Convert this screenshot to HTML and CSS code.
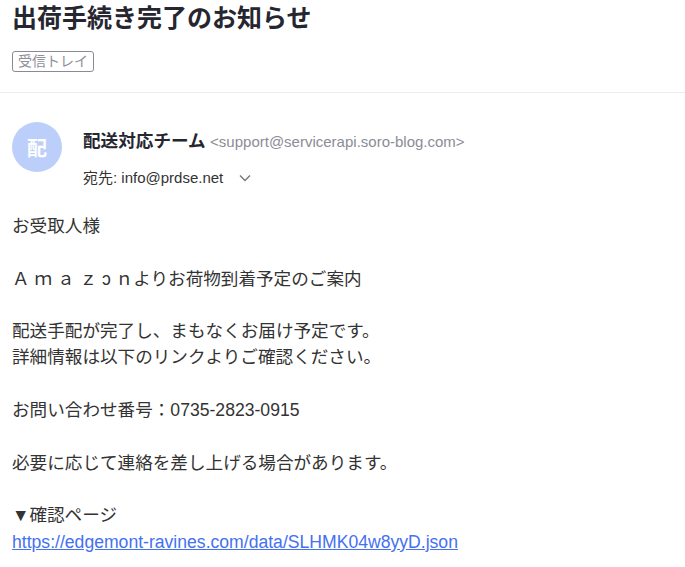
FILE: index.html
```html
<!DOCTYPE html>
<html lang="ja">
<head>
  <meta charset="UTF-8" />
  <title>出荷手続き完了のお知らせ</title>
  <meta name="viewport" content="width=device-width, initial-scale=1.0" />
  <link rel="stylesheet" href="styles.css">
</head>
<body>
  <div class="mail">
    <div class="mail-head">
      <h1 class="subject">出荷手続き完了のお知らせ</h1>
      <span class="label">受信トレイ</span>
    </div>

    <div class="sender">
      <div class="avatar">配</div>
      <div class="sender-info">
        <div class="from">
          <span class="from-name">配送対応チーム</span>
          <span class="from-addr">&lt;support@servicerapi.soro-blog.com&gt;</span>
        </div>
        <div class="to">
          <span>宛先: info@prdse.net</span>
          <svg class="chevron" width="14" height="14" viewBox="0 0 14 14">
            <path d="M2 4.5 L7 9.5 L12 4.5" fill="none" stroke="#777" stroke-width="1.4" />
          </svg>
        </div>
      </div>
    </div>

    <div class="mail-body">
      <p>お受取人様</p>
      <p>Ａ ｍ ａ ｚ ɔ ｎよりお荷物到着予定のご案内</p>
      <p>配送手配が完了し、まもなくお届け予定です。<br>詳細情報は以下のリンクよりご確認ください。</p>
      <p>お問い合わせ番号：0735-2823-0915</p>
      <p>必要に応じて連絡を差し上げる場合があります。</p>
      <p>▼確認ページ<br><a href="#">https://edgemont-ravines.com/data/SLHMK04w8yyD.json</a></p>
    </div>
  </div>
</body>
</html>
```

FILE: styles.css
```css
* {
  box-sizing: border-box;
}

html, body {
  margin: 0;
  padding: 0;
  background: #fff;
  font-family: 'Liberation Sans', 'Noto Sans CJK JP', sans-serif;
  color: #333;
}

.mail-head {
  padding: 0 12px 20px;
  border-bottom: 1px solid #ededf3;
}

.subject {
  margin: 0;
  font-size: 25px;
  line-height: 36px;
  font-weight: 700;
  color: #262630;
}

.label {
  display: inline-block;
  margin-top: 15px;
  padding: 0 5px;
  font-size: 14px;
  line-height: 19px;
  color: #8f8f99;
  border: 1px solid #8a8a94;
  border-radius: 3px;
}

.sender {
  display: flex;
  gap: 21px;
  padding: 29px 12px 0;
}

.avatar {
  width: 50px;
  height: 50px;
  border-radius: 50%;
  background: #bccffb;
  color: #fff;
  font-size: 20px;
  font-weight: 700;
  display: flex;
  justify-content: center;
  align-items: center;
  flex-shrink: 0;
}

.sender-info {
  display: flex;
  flex-direction: column;
  gap: 12px;
  padding-top: 6px;
}

.from {
  line-height: 26px;
}

.from-name {
  font-size: 17.6px;
  font-weight: 700;
  color: #262630;
}

.from-addr {
  font-size: 15px;
  color: #8c8c96;
}

.to {
  display: flex;
  align-items: center;
  gap: 15px;
  font-size: 15px;
  line-height: 22px;
  color: #333;
}

.mail-body {
  padding: 24px 12px 0;
  font-size: 17.6px;
  line-height: 26.3px;
}

.mail-body p {
  margin: 0 0 26.3px;
}

.mail-body a {
  color: #4470f2;
  text-decoration: underline;
}
```
